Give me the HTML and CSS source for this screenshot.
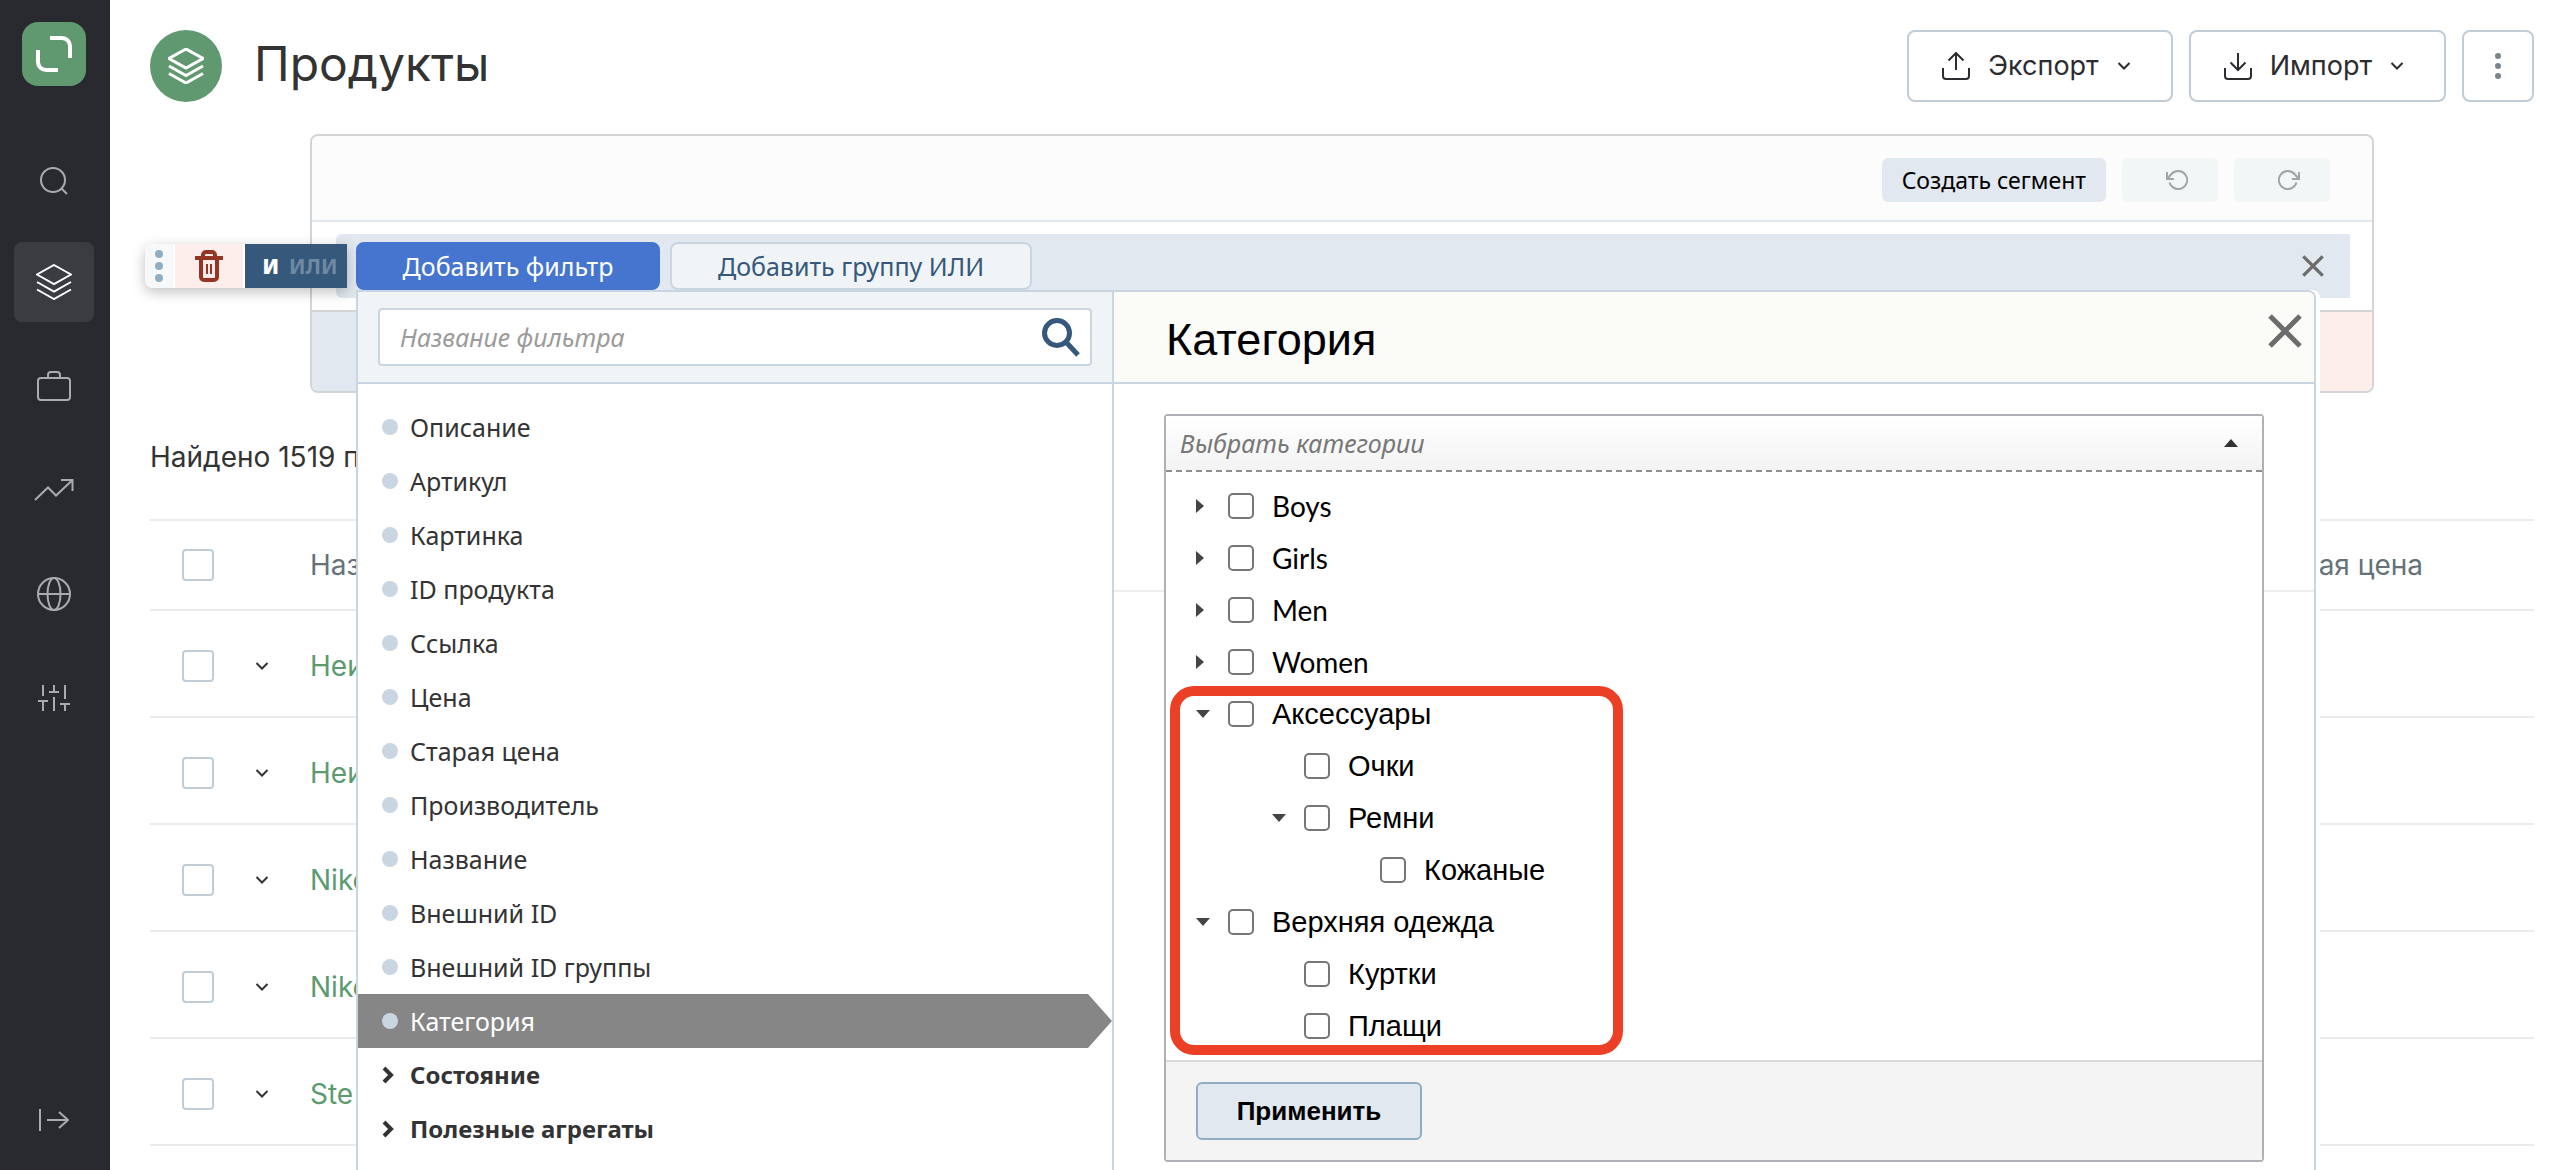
FILE: index.html
```html
<!DOCTYPE html>
<html lang="ru">
<head>
<meta charset="utf-8">
<title>Продукты</title>
<meta name="viewport" content="width=device-width, initial-scale=1">
<link rel="stylesheet" href="styles.css">
</head>
<body>
<svg class="defs" aria-hidden="true">
  <symbol id="i-layers" viewBox="0 0 36 36"><path d="M18 1L35 10.500 18 20 1 10.500zM1 18l17 9.500L35 18M1 25.500L18 35l17-9.500"/></symbol>
  <symbol id="i-chevron" viewBox="0 0 14 10"><path d="M1.500 2L7 7.500 12.500 2"/></symbol>
  <symbol id="i-cross" viewBox="0 0 34 34"><path d="M2 2l30 30M32 2L2 32"/></symbol>
  <symbol id="i-angle" viewBox="0 0 12 18"><path d="M2 2l7 7-7 7"/></symbol>
</svg>
<div class="app">
  <nav class="side">
    <a class="logo" href="#" aria-label="Главная"><svg width="36" height="36" viewBox="0 0 36 36"><path d="M14 2h12a8 8 0 0 1 8 8v12M2 14v12a8 8 0 0 0 8 8h12"/></svg></a>
    <div class="side-nav">
      <a class="side-link" href="#" aria-label="Поиск"><svg width="28" height="34" viewBox="0 -6 28 34"><circle cx="13" cy="13" r="12"/><path d="M21.500 21.500L27 27"/></svg></a>
      <a class="side-link active" href="#" aria-label="Продукты"><svg width="36" height="36"><use href="#i-layers"/></svg></a>
      <a class="side-link" href="#" aria-label="Заказы"><svg width="34" height="30" viewBox="0 0 34 30"><rect x="1" y="7" width="32" height="22" rx="3"/><path d="M11 7V4a3 3 0 0 1 3-3h6a3 3 0 0 1 3 3v3"/></svg></a>
      <a class="side-link" href="#" aria-label="Аналитика"><svg width="40" height="22" viewBox="0 0 40 22"><path d="M1 21L14 8.500l8 8L38 1.500M27 1h11.500v11"/></svg></a>
      <a class="side-link" href="#" aria-label="Сайт"><svg width="34" height="34" viewBox="0 0 34 34"><circle cx="17" cy="17" r="16"/><ellipse cx="17" cy="17" rx="6.500" ry="16"/><path d="M1 17h32"/></svg></a>
      <a class="side-link" href="#" aria-label="Настройки"><svg width="34" height="28" viewBox="0 0 34 28"><path d="M6 1v11M6 17v10M1 17h10M17 1v7M17 13v14M12 8h10M28 1v14M28 20v7M23 20h10"/></svg></a>
    </div>
    <a class="side-link collapse" href="#" aria-label="Развернуть меню"><svg width="30" height="22" viewBox="0 0 30 22"><path d="M1 0v22M8 11h21M20 3l9 8-9 8"/></svg></a>
  </nav>

  <main class="main">
    <header class="head">
      <span class="head-icon"><svg width="36" height="36"><use href="#i-layers"/></svg></span>
      <h1 class="title">Продукты</h1>
      <button class="btn" type="button"><svg width="28" height="28" viewBox="0 0 28 28"><path d="M1 16v8a3 3 0 0 0 3 3h20a3 3 0 0 0 3-3v-8M14 18V1M6.500 8.500L14 1l7.500 7.500"/></svg>Экспорт<svg width="14" height="10"><use href="#i-chevron"/></svg></button>
      <button class="btn" type="button"><svg width="28" height="28" viewBox="0 0 28 28"><path d="M1 16v8a3 3 0 0 0 3 3h20a3 3 0 0 0 3-3v-8M14 1v17M6.500 10.500L14 18l7.500-7.500"/></svg>Импорт<svg width="14" height="10"><use href="#i-chevron"/></svg></button>
      <button class="btn more" type="button" aria-label="Ещё"><svg width="6" height="26" viewBox="0 0 6 26"><circle cx="3" cy="3" r="3"/><circle cx="3" cy="13" r="3"/><circle cx="3" cy="23" r="3"/></svg></button>
    </header>

    <section class="builder">
      <div class="builder-top">
        <button class="tool strong" type="button">Создать сегмент</button>
        <button class="tool" type="button" aria-label="Отменить"><svg width="22" height="20" viewBox="0 0 22 20"><path d="M1 2v7h7M1.500 8.500L5.500 4A9 9 0 1 1 3.500 12.500"/></svg></button>
        <button class="tool" type="button" aria-label="Повторить"><svg width="22" height="20" viewBox="0 0 22 20"><path d="M21 2v7h-7M20.500 8.500L16.500 4A9 9 0 1 0 18.500 12.500"/></svg></button>
      </div>
      <div class="builder-body">
        <div class="group">
          <div class="handle">
            <span class="grip"><svg width="8" height="32" viewBox="0 0 8 32"><circle cx="4" cy="4" r="4"/><circle cx="4" cy="16" r="4"/><circle cx="4" cy="28" r="4"/></svg></span>
            <button class="trash" type="button" aria-label="Удалить"><svg width="28" height="32" viewBox="0 0 28 32"><path d="M0 8h28M8 7V5a3 3 0 0 1 3-3h6a3 3 0 0 1 3 3v2M6 8v19a3 3 0 0 0 3 3h10a3 3 0 0 0 3-3V8"/><path class="thin" d="M12 14v10M16 14v10"/></svg></button>
            <button class="logic" type="button"><b>И</b><span>ИЛИ</span></button>
          </div>
          <button class="add primary" type="button">Добавить фильтр</button>
          <button class="add" type="button">Добавить группу ИЛИ</button>
          <button class="close small" type="button" aria-label="Закрыть группу"><svg width="22" height="22"><use href="#i-cross"/></svg></button>

          <div class="popup">
            <div class="fields">
              <div class="search">
                <div class="search-box">
                  <input type="text" placeholder="Название фильтра" aria-label="Название фильтра">
                  <svg width="40" height="40" viewBox="0 0 40 40"><circle cx="17" cy="16" r="12.500"/><path d="M26 25l12 13"/></svg>
                </div>
              </div>
              <ul class="field-list">
                <li><a href="#">Описание</a></li>
                <li><a href="#">Артикул</a></li>
                <li><a href="#">Картинка</a></li>
                <li><a href="#">ID продукта</a></li>
                <li><a href="#">Ссылка</a></li>
                <li><a href="#">Цена</a></li>
                <li><a href="#">Старая цена</a></li>
                <li><a href="#">Производитель</a></li>
                <li><a href="#">Название</a></li>
                <li><a href="#">Внешний ID</a></li>
                <li><a href="#">Внешний ID группы</a></li>
                <li><a class="current" href="#">Категория</a></li>
                <li><a class="folder" href="#"><svg width="12" height="18"><use href="#i-angle"/></svg>Состояние</a></li>
                <li><a class="folder" href="#"><svg width="12" height="18"><use href="#i-angle"/></svg>Полезные агрегаты</a></li>
              </ul>
            </div>
            <div class="detail">
              <div class="detail-head">
                <h2>Категория</h2>
                <button class="close" type="button" aria-label="Закрыть"><svg width="34" height="34"><use href="#i-cross"/></svg></button>
              </div>
              <div class="detail-body">
                <div class="picker">
                  <button class="picker-head" type="button">Выбрать категории<svg width="14" height="8" viewBox="0 0 14 8"><path d="M0 8l7-8 7 8z"/></svg></button>
                  <div class="tree">
                    <ul>
                      <li><div class="node latin"><button class="tw" type="button" aria-label="Раскрыть"></button><label><input type="checkbox">Boys</label></div></li>
                      <li><div class="node latin"><button class="tw" type="button" aria-label="Раскрыть"></button><label><input type="checkbox">Girls</label></div></li>
                      <li><div class="node latin"><button class="tw" type="button" aria-label="Раскрыть"></button><label><input type="checkbox">Men</label></div></li>
                      <li><div class="node latin"><button class="tw" type="button" aria-label="Раскрыть"></button><label><input type="checkbox">Women</label></div></li>
                      <li><div class="node"><button class="tw open" type="button" aria-label="Свернуть"></button><label><input type="checkbox">Аксессуары</label></div>
                        <ul>
                          <li><div class="node"><span class="tw-gap"></span><label><input type="checkbox">Очки</label></div></li>
                          <li><div class="node"><button class="tw open" type="button" aria-label="Свернуть"></button><label><input type="checkbox">Ремни</label></div>
                            <ul>
                              <li><div class="node"><span class="tw-gap"></span><label><input type="checkbox">Кожаные</label></div></li>
                            </ul>
                          </li>
                        </ul>
                      </li>
                      <li><div class="node"><button class="tw open" type="button" aria-label="Свернуть"></button><label><input type="checkbox">Верхняя одежда</label></div>
                        <ul>
                          <li><div class="node"><span class="tw-gap"></span><label><input type="checkbox">Куртки</label></div></li>
                          <li><div class="node"><span class="tw-gap"></span><label><input type="checkbox">Плащи</label></div></li>
                        </ul>
                      </li>
                    </ul>
                    <div class="marker"></div>
                  </div>
                  <div class="picker-foot"><button class="apply" type="button">Применить</button></div>
                </div>
              </div>
            </div>
          </div>
        </div>
      </div>
      <div class="builder-foot"><div></div><div class="danger"></div></div>
    </section>

    <p class="found">Найдено 1519 продуктов</p>

    <table class="grid">
      <colgroup><col class="c-check"><col class="c-exp"><col><col class="c-price"></colgroup>
      <thead>
        <tr><th><input class="box" type="checkbox" aria-label="Выбрать все"></th><th></th><th>Название</th><th>Старая цена</th></tr>
      </thead>
      <tbody>
        <tr><td><input class="box" type="checkbox" aria-label="Выбрать"></td><td><button class="exp" type="button" aria-label="Подробнее"><svg width="14" height="10"><use href="#i-chevron"/></svg></button></td><td><a href="#">Неизвестный</a></td><td></td></tr>
        <tr><td><input class="box" type="checkbox" aria-label="Выбрать"></td><td><button class="exp" type="button" aria-label="Подробнее"><svg width="14" height="10"><use href="#i-chevron"/></svg></button></td><td><a href="#">Неизвестный</a></td><td></td></tr>
        <tr><td><input class="box" type="checkbox" aria-label="Выбрать"></td><td><button class="exp" type="button" aria-label="Подробнее"><svg width="14" height="10"><use href="#i-chevron"/></svg></button></td><td><a href="#">Nike</a></td><td></td></tr>
        <tr><td><input class="box" type="checkbox" aria-label="Выбрать"></td><td><button class="exp" type="button" aria-label="Подробнее"><svg width="14" height="10"><use href="#i-chevron"/></svg></button></td><td><a href="#">Nike</a></td><td></td></tr>
        <tr><td><input class="box" type="checkbox" aria-label="Выбрать"></td><td><button class="exp" type="button" aria-label="Подробнее"><svg width="14" height="10"><use href="#i-chevron"/></svg></button></td><td><a href="#">Ste</a></td><td></td></tr>
      </tbody>
    </table>
  </main>
</div>
</body>
</html>
```
FILE: styles.css
```css
* { box-sizing: border-box; }

body {
  margin: 0;
  background: #fff;
  color: #333;
  font: 28px/36px Inter, "Liberation Sans", sans-serif;
}

button, input { font: inherit; color: inherit; margin: 0; }
button { padding: 0; border: 0; background: none; cursor: pointer; }
a { color: inherit; text-decoration: none; }
ul { list-style: none; margin: 0; padding: 0; }
svg { flex: none; fill: none; stroke: currentColor; stroke-width: 2; }
.defs { position: absolute; width: 0; height: 0; }

.app { display: flex; height: 100vh; overflow: hidden; }

/* Sidebar */
.side {
  flex: none;
  display: flex;
  flex-direction: column;
  align-items: center;
  width: 110px;
  padding: 22px 2px 10px 0;
  background: #292a2f;
  color: #a9abae;
}
.logo {
  display: grid;
  place-items: center;
  width: 64px;
  height: 64px;
  border-radius: 16px;
  background: #60986f;
  color: #fff;
}
.logo svg { stroke-width: 4; }
.side-nav { display: flex; flex-direction: column; gap: 24px; margin-top: 52px; }
.side-link {
  display: grid;
  place-items: center;
  width: 80px;
  height: 80px;
  border-radius: 8px;
}
.side-link.active { background: #3a3c41; color: #fff; }
.head-icon svg { stroke-width: 3; }
.collapse { margin-top: auto; }

/* Page header */
.main { flex: 1; min-width: 0; padding: 30px 40px 0; }
.head { display: flex; align-items: center; gap: 16px; height: 72px; }
.head-icon {
  display: grid;
  place-items: center;
  width: 72px;
  height: 72px;
  border-radius: 50%;
  background: #60986f;
  color: #fff;
}
.title { flex: 1; margin: 0 0 0 16px; padding-bottom: 4px; font-size: 48px; font-weight: 400; line-height: 68px; }
.btn {
  display: flex;
  align-items: center;
  gap: 18px;
  height: 72px;
  padding: 0 40px 0 33px;
  border: 2px solid #c0ccd6;
  border-radius: 8px;
  background: #fff;
  color: #2b2c30;
  font-size: 27px;
}
.more { justify-content: center; width: 72px; padding: 0; color: #7a858b; }
.more svg, .grip svg { fill: currentColor; stroke: none; }

/* Filter builder */
.builder {
  margin: 32px 160px 0;
  border: 2px solid #d3d4d6;
  border-radius: 8px;
}
.builder-top {
  display: flex;
  justify-content: flex-end;
  align-items: center;
  gap: 16px;
  height: 86px;
  padding: 4px 42px 0 0;
  border-bottom: 2px solid #e1e8ef;
  border-radius: 8px 8px 0 0;
  background: #fcfcfc;
}
.tool {
  display: grid;
  place-items: center;
  width: 96px;
  height: 44px;
  padding-left: 14px;
  border-radius: 6px;
  background: #f2f6f7;
  color: #a2a5a7;
}
.tool.strong {
  width: auto;
  padding: 0 20px;
  background: #e1e8ef;
  color: #000;
  font: 23px/32px "Noto Sans", "Open Sans", sans-serif;
}
.builder-body { padding: 12px 22px 12px 24px; }
.group {
  position: relative;
  display: flex;
  align-items: center;
  gap: 10px;
  height: 64px;
  padding: 0 26px 0 20px;
  border-radius: 6px 0 0 6px;
  background: #e1e8ef;
  font-family: "Noto Sans", "Open Sans", sans-serif;
  font-size: 25px;
}
.handle {
  position: absolute;
  left: -191px;
  top: 10px;
  display: flex;
  gap: 2px;
  height: 44px;
  border-radius: 8px 0 0 8px;
  background: #fff;
  box-shadow: 0 4px 14px rgba(0, 0, 0, .25);
}
.grip {
  display: grid;
  place-items: center;
  width: 28px;
  border-radius: 8px 0 0 8px;
  background: #f6f8fa;
  color: #91adc4;
}
.trash { display: grid; place-items: center; width: 68px; background: #fdeeeb; color: #953524; }
.trash svg { stroke-width: 4; }
.trash .thin { stroke-width: 2; }
.logic {
  display: flex;
  align-items: center;
  justify-content: center;
  gap: 10px;
  width: 102px;
  padding-left: 8px;
  background: #36587a;
  color: #6f8aa3;
  font-size: 21px;
  font-weight: 700;
}
.logic b { color: #fff; }
.add {
  width: 362px;
  height: 48px;
  border: 2px solid #c9d6e2;
  border-radius: 8px;
  background: #f0f4f7;
  color: #36587a;
}
.add.primary { width: 304px; border-color: #4675d0; background: #4675d0; color: #fff; }
.close { color: #6c6c6c; }
.close svg { display: block; stroke-width: 5; }
.small { margin-left: auto; }
.builder-foot {
  display: flex;
  height: 81px;
  border-top: 2px solid #d3d4d6;
}
.builder-foot > div { flex: 1; border-radius: 0 0 0 6px; background: #e1e8ef; }
.builder-foot > .danger { border-radius: 0 0 6px 0; background: #fdeeeb; }

/* Filter popup */
.popup {
  position: absolute;
  z-index: 2;
  top: 56px;
  left: 20px;
  right: 34px;
  display: flex;
  min-height: 100vh;
  border: 2px solid #c9d6e2;
  border-radius: 0 8px 0 0;
  background: #fff;
  box-shadow: 4px 0 0 #fff;
}
.fields { flex: none; width: 756px; border-right: 2px solid #c9d6e2; }
.search {
  height: 92px;
  padding: 16px 20px;
  border-bottom: 2px solid #c9d6e2;
  background: #f0f4f7;
}
.search-box {
  display: flex;
  align-items: center;
  height: 58px;
  padding: 0 10px 0 20px;
  border: 2px solid #c9d6e2;
  border-radius: 4px;
  background: #fff;
  color: #36587a;
}
.search-box input { flex: 1; min-width: 0; height: 50px; padding: 0; border: 0; background: none; outline: 0; }
.search-box input::placeholder { color: #9b9b9b; font-style: italic; opacity: 1; }
.search-box svg { stroke-width: 5; }
.field-list { padding-top: 16px; }
.field-list a {
  display: flex;
  align-items: center;
  gap: 12px;
  height: 54px;
  padding-left: 24px;
}
.field-list a::before {
  content: "";
  width: 16px;
  height: 16px;
  border-radius: 50%;
  background: #c9d5e1;
}
.field-list .current {
  background: #868686;
  color: #fff;
  clip-path: polygon(0 0, calc(100% - 24px) 0, 100% 50%, calc(100% - 24px) 100%, 0 100%);
}
.field-list .folder { gap: 16px; font-size: 24px; font-weight: 700; }
.field-list .folder::before { display: none; }
.folder svg { stroke-width: 4; }

.detail { flex: 1; min-width: 0; font-family: "Liberation Sans", sans-serif; color: #000; }
.detail-head {
  display: flex;
  justify-content: space-between;
  height: 92px;
  padding: 22px 12px 0 52px;
  border-bottom: 2px solid #c9d6e2;
  border-radius: 0 6px 0 0;
  background: #fbfbf7;
}
.detail-head h2 { margin: 0; font-size: 45px; font-weight: 400; line-height: 52px; }
.detail-head .close { align-self: flex-start; }
.detail-body {
  padding: 30px 50px;
  background: linear-gradient(#eee, #eee) 0 206px / 100% 2px no-repeat;
}
.picker { border: 2px solid #b0b0b8; border-radius: 4px; background: #fff; }
.picker-head {
  display: flex;
  align-items: center;
  justify-content: space-between;
  width: 100%;
  height: 56px;
  padding: 0 24px 0 14px;
  border-bottom: 2px dashed #8f8f8f;
  background: linear-gradient(#fff, #f3f3f3);
  color: #777;
  font-family: "Noto Sans", "Open Sans", sans-serif;
  font-size: 25px;
  font-style: italic;
}
.picker-head svg { fill: #333; stroke: none; }
.tree { position: relative; padding: 8px 0 8px 30px; font-size: 29px; }
.tree ul ul { padding-left: 76px; }
.node, .node label { display: flex; align-items: center; gap: 18px; height: 52px; }
.latin { font-family: Lato, sans-serif; font-size: 28px; }
.node input {
  appearance: none;
  width: 26px;
  height: 26px;
  border: 2px solid #767676;
  border-radius: 5px;
  background: #fff;
}
.tw, .tw-gap { width: 14px; height: 14px; }
.tw { background: #444; clip-path: polygon(0 0, 8px 50%, 0 100%); }
.tw.open { clip-path: polygon(0 3px, 100% 3px, 50% 11px); }
.marker {
  position: absolute;
  top: 214px;
  left: 4px;
  width: 453px;
  height: 369px;
  border: 10px solid #ec4026;
  border-radius: 24px;
  pointer-events: none;
}
.picker-foot { padding: 20px 30px; border-top: 2px solid #d8d8d8; background: #f4f4f4; font-size: 26px; }
.apply {
  display: block;
  width: 226px;
  height: 58px;
  border: 2px solid #91adc4;
  border-radius: 6px;
  background: #e1e8ef;
  font-weight: 700;
}

/* Product table */
.found { margin: 46px 0 44px; }
.grid { width: 100%; border-collapse: collapse; table-layout: fixed; border-top: 2px solid #e9ebec; }
.c-check { width: 80px; }
.c-exp { width: 80px; }
.c-price { width: 282px; }
.grid tr { height: 107px; border-bottom: 2px solid #e9ebec; }
.grid thead tr { height: 90px; }
.grid th, .grid td { padding: 0; font-weight: 400; text-align: left; vertical-align: middle; white-space: nowrap; }
.grid th { color: #667278; }
.grid td { padding-top: 4px; color: #5c9a70; }
.box {
  appearance: none;
  display: block;
  width: 32px;
  height: 32px;
  margin-left: 32px;
  border: 2px solid #c0ccd6;
  border-radius: 4px;
}
.exp { display: block; margin-left: 25px; color: #333; }
.exp svg { display: block; }
```
